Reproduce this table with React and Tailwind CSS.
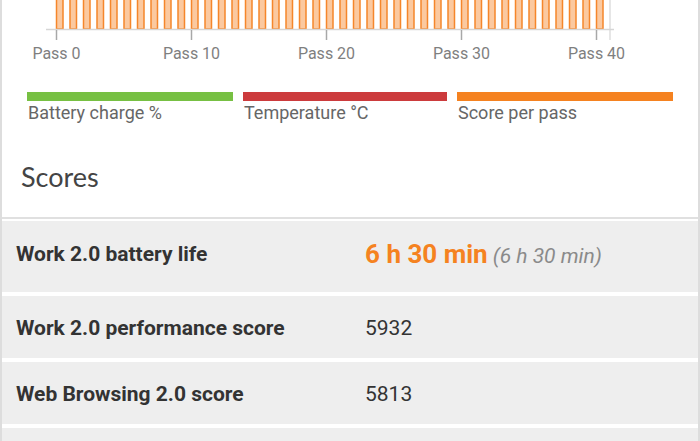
import React from 'react'

const passes = Array.from({ length: 41 }, (_, i) => i)
const ticks = [0, 10, 20, 30, 40]

// x position of a pass on the chart
const px = (i) => 56 + i * 13.5

function Chart() {
  return (
    <svg width="696" height="64" className="block">
      <line x1="608" y1="0" x2="608" y2="40" stroke="#dedede" strokeWidth="1.5" />
      {passes.map((i) => (
        <rect
          key={i}
          x={px(i) - 1.5}
          y="-2"
          width="6.5"
          height="31"
          fill="#fbc9a0"
          stroke="#f5862b"
          strokeWidth="1.5"
        />
      ))}
      <line x1="44" y1="29.5" x2="612" y2="29.5" stroke="#d6d6d6" strokeWidth="1.5" />
      {ticks.map((t) => (
        <g key={t}>
          <line x1={px(t) - 1.5} y1="30" x2={px(t) - 1.5} y2="40" stroke="#a8a8a8" strokeWidth="1.5" />
          <text
            x={px(t) - 1.5}
            y="59"
            textAnchor="middle"
            fontFamily="Roboto, sans-serif"
            fontSize="16"
            fill="#7f7f7f"
          >
            Pass {t}
          </text>
        </g>
      ))}
    </svg>
  )
}

const legend = [
  { label: 'Battery charge %', color: 'bg-[#77c043]' },
  { label: 'Temperature °C', color: 'bg-[#cc3b3d]' },
  { label: 'Score per pass', color: 'bg-[#f58220]' },
]

function Row({ label, height, children }) {
  return (
    <div className={`flex items-center bg-[#eeeeee] ${height}`}>
      <div className="w-[363px] pl-[14px] text-[21px] font-bold text-[#333333]">{label}</div>
      <div className="flex items-baseline">{children}</div>
    </div>
  )
}

export default function App() {
  return (
    <div className="w-[700px] h-[441px] overflow-hidden bg-white border-x-2 border-[#dddddd] font-['Roboto',sans-serif]">
      <Chart />

      <div className="grid grid-cols-[206px_204px_216px] gap-[10px] pl-[25px] mt-[28px]">
        {legend.map((l) => (
          <div key={l.label}>
            <div className={`h-[9px] ${l.color}`} />
            <div className="text-[18px] leading-[24px] text-[#666666] pl-px">{l.label}</div>
          </div>
        ))}
      </div>

      <div className="pl-[19px] pt-[36px] pb-[24px] font-['Lato',sans-serif] text-[27px] leading-[32px] text-[#444444]">
        Scores
      </div>
      <div className="h-[2px] bg-[#e0e0e0]" />

      <div className="flex flex-col gap-[4px] mt-[2px]">
        <Row label="Work 2.0 battery life" height="h-[71px] pb-[4px]">
          <span className="text-[26px] font-bold text-[#f58220]">6 h 30 min</span>
          <span className="ml-[5px] text-[21px] italic text-[#8a8a8a]">(6 h 30 min)</span>
        </Row>
        <Row label="Work 2.0 performance score" height="h-[62px] pt-[3px]">
          <span className="text-[21px] text-[#333333]">5932</span>
        </Row>
        <Row label="Web Browsing 2.0 score" height="h-[62px] pt-[3px]">
          <span className="text-[21px] text-[#333333]">5813</span>
        </Row>
        <Row label="" height="h-[62px]" />
      </div>
    </div>
  )
}
